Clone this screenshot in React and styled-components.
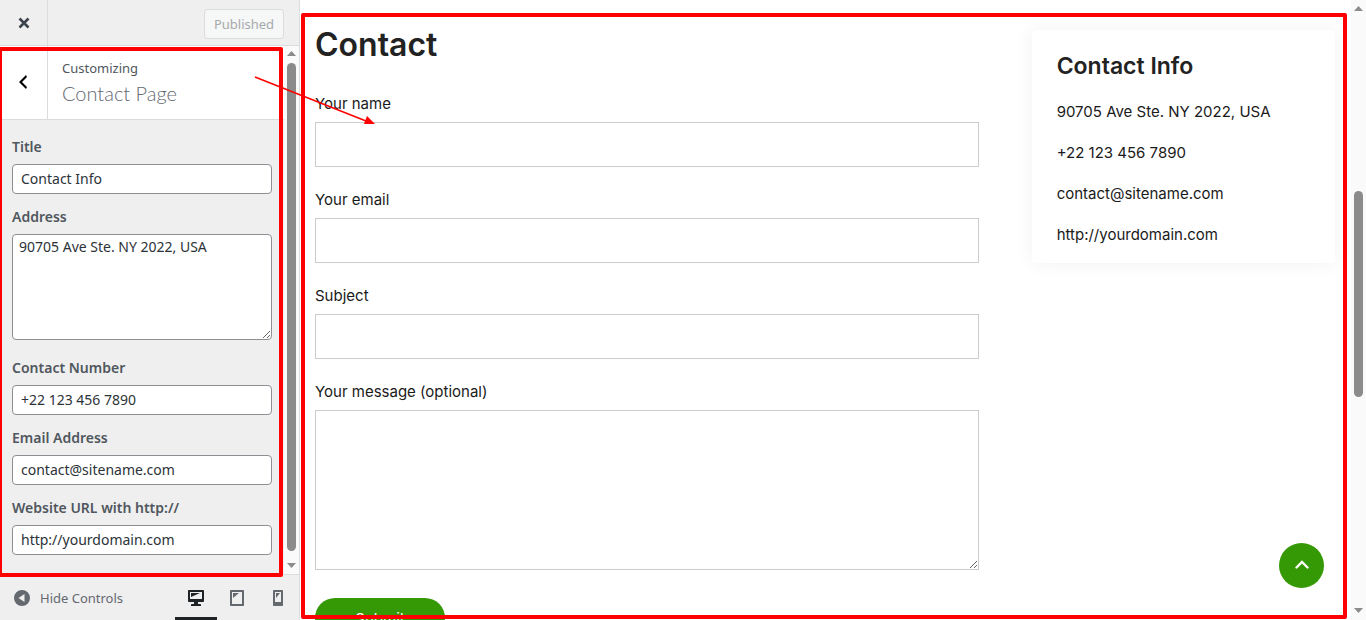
import React from "react";
import styled, { createGlobalStyle } from "styled-components";

const Global = createGlobalStyle`
  *, *::before, *::after { box-sizing: border-box; }
  html, body, #root { height: 100%; }
  body { margin: 0; background: #fff; overflow: hidden; }
  button, input, textarea { font: inherit; }
  h1, h2, p, ul { margin: 0; padding: 0; font-weight: inherit; }
`;

const Screen = styled.div`
  position: relative;
  display: grid;
  grid-template-columns: 300px minmax(0, 1fr);
  height: 100vh;
  overflow: hidden;
`;

/* Controls sidebar */

const Sidebar = styled.aside`
  position: relative;
  display: flex;
  flex-direction: column;
  min-height: 0;
  background: #efefef;
  border-right: 1px solid #dcdcde;
  color: #3c434a;
  font-family: "Noto Sans", "Open Sans", sans-serif;
  font-size: 14px;
`;

const TopBar = styled.header`
  display: flex;
  align-items: center;
  justify-content: space-between;
  height: 46px;
  flex: none;
  padding-right: 15px;
  border-bottom: 1px solid #dcdcde;
`;

const IconButton = styled.button`
  display: flex;
  align-items: center;
  justify-content: center;
  align-self: stretch;
  width: 48px;
  padding: ${(p) => p.$pad || "0"};
  border: 0;
  border-right: 1px solid #dcdcde;
  background: ${(p) => p.$fill || "transparent"};
  color: ${(p) => p.$color || "#3c434a"};
`;

const PublishButton = styled.button`
  height: 30px;
  width: 80px;
  margin-top: 2px;
  padding: 0;
  border: 1px solid #dcdcde;
  border-radius: 3px;
  background: #f6f7f7;
  color: #a7aaad;
  font-size: 13px;
`;

const ScrollRow = styled.div`
  display: flex;
  flex: 1;
  min-height: 0;
`;

const Panel = styled.section`
  flex: 1;
  min-width: 0;
  overflow: hidden;
`;

const PanelHead = styled.div`
  display: flex;
  height: 74px;
  background: #fff;
  border-bottom: 1px solid #dcdcde;
`;

const PanelTitle = styled.h2`
  display: flex;
  flex-direction: column;
  padding: 11px 14px;
  font-size: 20px;
  font-family: Lato, sans-serif;
  font-weight: 300;
  line-height: 28px;
  color: #646970;
`;

const PanelKicker = styled.span`
  font-family: "Noto Sans", sans-serif;
  font-size: 13px;
  font-weight: 400;
  line-height: 22px;
  color: #50575e;
`;

const Controls = styled.form`
  display: flex;
  flex-direction: column;
  gap: 14px;
  padding: 18px 12px;
`;

const Control = styled.div`
  display: flex;
  flex-direction: column;
  gap: 8px;
`;

const ControlLabel = styled.label`
  font-weight: 600;
  line-height: 18px;
  color: #50575e;
`;

const ControlInput = styled.input`
  width: 100%;
  height: 30px;
  padding: 0 8px 2px;
  border: 1px solid #8c8f94;
  border-radius: 4px;
  background: #fff;
  color: #2c3338;
`;

const ControlArea = styled.textarea`
  display: block;
  width: 100%;
  height: 106px;
  margin-bottom: 5px;
  padding: 2px 6px;
  border: 1px solid #8c8f94;
  border-radius: 4px;
  background: #fff;
  color: #2c3338;
  line-height: 20px;
`;

const BottomBar = styled.footer`
  display: flex;
  align-items: stretch;
  justify-content: space-between;
  height: 46px;
  flex: none;
  border-top: 1px solid #dcdcde;
`;

const HideButton = styled.button`
  display: flex;
  align-items: center;
  gap: 8px;
  padding: 0 0 0 12px;
  border: 0;
  background: none;
  color: #646970;
  font-size: 13px;
`;

const Devices = styled.div`
  display: flex;
`;

const DeviceButton = styled.button`
  display: flex;
  align-items: center;
  justify-content: center;
  width: ${(p) => (p.$active ? 42 : 41)}px;
  padding: ${(p) => (p.$active ? "4px 0 0" : "4px 2px 0 0")};
  border: 0;
  border-bottom: 3px solid ${(p) => (p.$active ? "#1d2327" : "transparent")};
  background: none;
  color: ${(p) => (p.$active ? "#1d2327" : "#646970")};
`;

/* Scroll rails */

const Rail = styled.div`
  display: flex;
  flex-direction: column;
  align-items: center;
  width: 15px;
  flex: none;
  padding: ${(p) => p.$pad || "4px 0"};
  background: #fafafa;
`;

const RailTrack = styled.div`
  display: flex;
  flex-direction: column;
  flex: 1;
  width: 9px;
  margin: 7px 0 8px;
`;

const Spacer = styled.div`
  flex: ${(p) => p.$grow};
`;

const Thumb = styled.div`
  flex: ${(p) => p.$grow};
  border-radius: 5px;
  background: #8b8b8b;
`;

/* Site preview */

const Preview = styled.main`
  position: relative;
  display: flex;
  min-width: 0;
  min-height: 0;
  color: #1a1a1a;
  font-family: Inter, sans-serif;
  font-size: 15px;
`;

const Page = styled.div`
  flex: 1;
  min-width: 0;
  display: grid;
  grid-template-columns: minmax(0, 35fr) minmax(0, 16fr);
  align-items: start;
  gap: 53px;
  padding: 24px 16px 0 15px;
  overflow: hidden;
`;

const PageTitle = styled.h1`
  margin-bottom: 26px;
  font-size: 32px;
  font-weight: 600;
  line-height: 42px;
  color: #222;
`;

const ContactForm = styled.form`
  display: flex;
  flex-direction: column;
  gap: 21px;
`;

const Field = styled.div`
  display: flex;
  flex-direction: column;
  gap: 6px;
`;

const FieldLabel = styled.label`
  line-height: 24px;
`;

const FieldInput = styled.input`
  width: 100%;
  height: 45px;
  padding: 0 12px;
  border: 1px solid #ccc;
  background: #fff;
`;

const FieldArea = styled.textarea`
  display: block;
  width: 100%;
  height: 160px;
  padding: 12px;
  border: 1px solid #ccc;
  background: #fff;
`;

const SubmitButton = styled.button`
  align-self: flex-start;
  min-width: 130px;
  height: 40px;
  margin-top: 7px;
  padding: 0 40px;
  border: 0;
  border-radius: 20px;
  background: #359805;
  color: #fff;
`;

const InfoCard = styled.section`
  margin-top: 6px;
  padding: 21px 25px 15px;
  border-radius: 4px;
  background: #fff;
  box-shadow: 0 0 20px rgba(0, 0, 0, 0.06);
`;

const InfoTitle = styled.h2`
  margin-bottom: 18px;
  font-size: 23px;
  font-weight: 600;
  line-height: 30px;
  color: #222;
`;

const InfoList = styled.ul`
  display: flex;
  flex-direction: column;
  gap: 15px;
  list-style: none;
  line-height: 26px;
`;

const InfoLink = styled.a`
  color: inherit;
  text-decoration: none;
`;

const ToTop = styled.button`
  position: absolute;
  right: 42px;
  bottom: 32px;
  display: flex;
  align-items: center;
  justify-content: center;
  width: 45px;
  height: 45px;
  padding: 0 0 2px;
  border: 0;
  border-radius: 50%;
  background: #359805;
  color: #fff;
`;

/* Red mark-up over the page */

const Highlight = styled.div`
  position: absolute;
  inset: ${(p) => p.$inset};
  border: 4px solid #f00;
  border-radius: 2px;
  pointer-events: none;
`;

const Arrow = styled.svg`
  position: absolute;
  left: 250px;
  top: 70px;
  pointer-events: none;
`;

const DashIcon = ({ d, size = 20 }) => (
  <svg width={size} height={size} viewBox="0 0 20 20" fill="currentColor" fillRule="evenodd" aria-hidden="true">
    <path d={d} />
  </svg>
);

const icons = {
  back: "M14 5l-5 5 5 5-1 2-7-7 7-7z",
  desktop:
    "M3 2h14c.55 0 1 .45 1 1v10c0 .55-.45 1-1 1h-5v2h2c.55 0 1 .45 1 1v1H5v-1c0-.55.45-1 1-1h2v-2H3c-.55 0-1-.45-1-1V3c0-.55.45-1 1-1zm13 9V4H4v7h12zM5 5h9L5 9V5z",
  tablet:
    "M4 2h12c.55 0 1 .45 1 1v14c0 .55-.45 1-1 1H4c-.55 0-1-.45-1-1V3c0-.55.45-1 1-1zm11 14V4H5v12h10zM6 5h6l-6 5V5z",
  phone:
    "M6 2h8c.55 0 1 .45 1 1v14c0 .55-.45 1-1 1H6c-.55 0-1-.45-1-1V3c0-.55.45-1 1-1zm7 12V4H7v10h6zM8 5h4l-4 5V5z",
  collapse: "M10 2a8 8 0 1 0 0 16a8 8 0 1 0 0-16zM12.500 6v8L6.500 10z",
};

const Triangle = ({ down }) => (
  <svg width="9" height="5" viewBox="0 0 9 5" fill="#8b8b8b" aria-hidden="true">
    <path d={down ? "M0 0h9L4.500 5z" : "M0 5h9L4.500 0z"} />
  </svg>
);

const ScrollRail = ({ before, thumb, after, pad }) => (
  <Rail $pad={pad} aria-hidden="true">
    <Triangle />
    <RailTrack>
      <Spacer $grow={before} />
      <Thumb $grow={thumb} />
      <Spacer $grow={after} />
    </RailTrack>
    <Triangle down />
  </Rail>
);

const controls = [
  { id: "info-title", label: "Title", value: "Contact Info" },
  { id: "info-address", label: "Address", value: "90705 Ave Ste. NY 2022, USA", area: true },
  { id: "info-number", label: "Contact Number", value: "+22 123 456 7890" },
  { id: "info-email", label: "Email Address", value: "contact@sitename.com" },
  { id: "info-url", label: "Website URL with http://", value: "http://yourdomain.com" },
];

const fields = [
  { id: "your-name", label: "Your name", type: "text" },
  { id: "your-email", label: "Your email", type: "email" },
  { id: "your-subject", label: "Subject", type: "text" },
];

const devices = ["desktop", "tablet", "phone"];

export default function App() {
  return (
    <Screen>
      <Global />
      <Sidebar>
        <TopBar>
          <IconButton type="button" aria-label="Close">
            <svg width="12" height="12" viewBox="0 0 12 12" stroke="currentColor" strokeWidth="2.600" aria-hidden="true">
              <path d="M1.500 1.500l9 9M10.500 1.500l-9 9" />
            </svg>
          </IconButton>
          <PublishButton type="button" disabled>Published</PublishButton>
        </TopBar>
        <ScrollRow>
          <Panel>
            <PanelHead>
              <IconButton type="button" aria-label="Back" $fill="#fff" $color="#000" $pad="0 2px 2px 0">
                <DashIcon d={icons.back} />
              </IconButton>
              <PanelTitle>
                <PanelKicker>Customizing</PanelKicker>
                Contact Page
              </PanelTitle>
            </PanelHead>
            <Controls>
              {controls.map((c) => (
                <Control key={c.id}>
                  <ControlLabel htmlFor={c.id}>{c.label}</ControlLabel>
                  {c.area ? (
                    <ControlArea id={c.id} defaultValue={c.value} />
                  ) : (
                    <ControlInput id={c.id} defaultValue={c.value} />
                  )}
                </Control>
              ))}
            </Controls>
          </Panel>
          <ScrollRail before={0} thumb={488} after={4} pad="5px 0 6px" />
        </ScrollRow>
        <BottomBar>
          <HideButton type="button">
            <DashIcon d={icons.collapse} />
            Hide Controls
          </HideButton>
          <Devices>
            {devices.map((d) => (
              <DeviceButton key={d} type="button" aria-label={d} $active={d === "desktop"}>
                <DashIcon d={icons[d]} />
              </DeviceButton>
            ))}
          </Devices>
        </BottomBar>
        <Highlight $inset="47px 16px 43px -2px" />
      </Sidebar>

      <Preview>
        <Page>
          <div>
            <PageTitle>Contact</PageTitle>
            <ContactForm>
              {fields.map((f) => (
                <Field key={f.id}>
                  <FieldLabel htmlFor={f.id}>{f.label}</FieldLabel>
                  <FieldInput id={f.id} type={f.type} />
                </Field>
              ))}
              <Field>
                <FieldLabel htmlFor="your-message">Your message (optional)</FieldLabel>
                <FieldArea id="your-message" />
              </Field>
              <SubmitButton type="submit">Submit</SubmitButton>
            </ContactForm>
          </div>
          <InfoCard>
            <InfoTitle>Contact Info</InfoTitle>
            <InfoList>
              <li>90705 Ave Ste. NY 2022, USA</li>
              <li>+22 123 456 7890</li>
              <li><InfoLink href="mailto:contact@sitename.com">contact@sitename.com</InfoLink></li>
              <li><InfoLink href="http://yourdomain.com">http://yourdomain.com</InfoLink></li>
            </InfoList>
          </InfoCard>
        </Page>
        <ScrollRail before={173} thumb={206} after={203} pad="6px 0 7px" />
        <ToTop type="button" aria-label="Back to top">
          <svg width="14" height="9" viewBox="0 0 14 9" fill="none" stroke="currentColor" strokeWidth="2.400" strokeLinecap="round" aria-hidden="true">
            <path d="M1.500 7.500L7 2l5.500 5.500" />
          </svg>
        </ToTop>
        <Highlight $inset="13px 19px 1px 1px" />
      </Preview>

      <Arrow width="130" height="60" viewBox="0 0 130 60" aria-hidden="true">
        <path d="M5 7L116 51" stroke="#f00" strokeWidth="1.600" />
        <path d="M125 54L114 54L117 46z" fill="#f00" />
      </Arrow>
    </Screen>
  );
}
